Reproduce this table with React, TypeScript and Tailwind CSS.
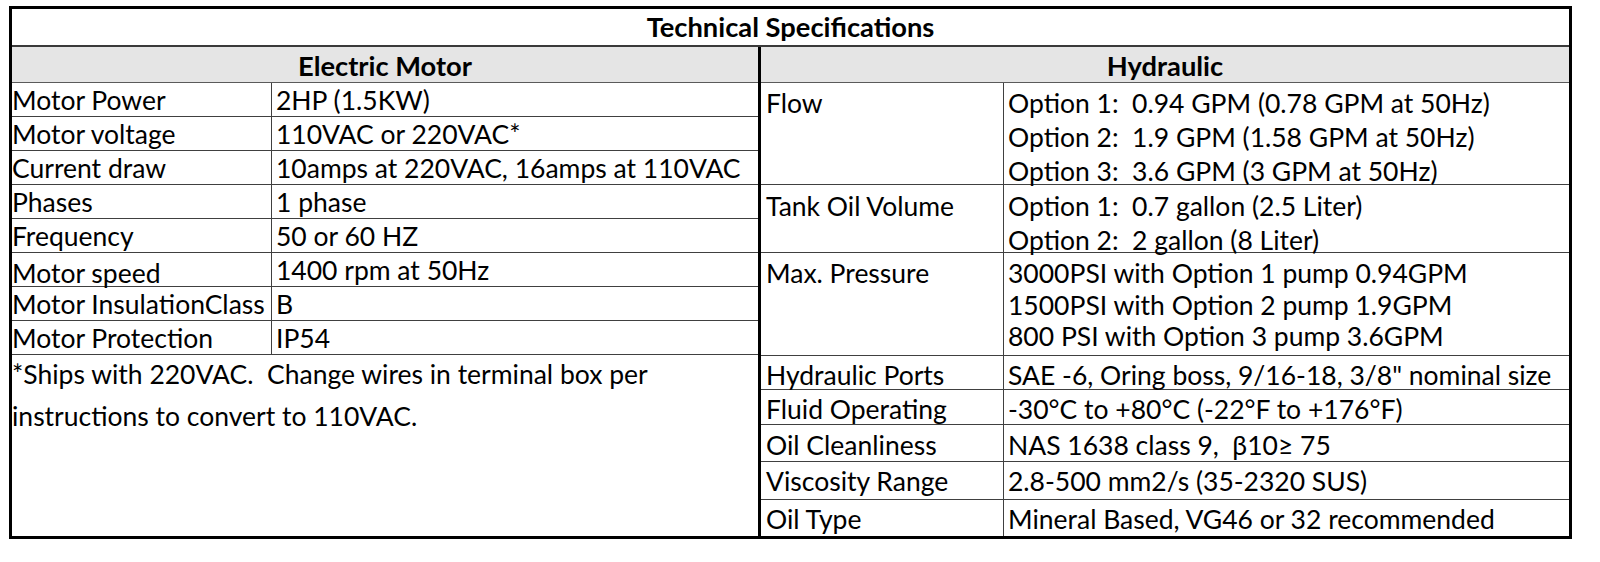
import React from "react";

type LeftRow = { k: string; v: string; kpt?: string };

const leftRows: LeftRow[] = [
  { k: "Motor Power", v: "2HP (1.5KW)" },
  { k: "Motor voltage", v: "110VAC or 220VAC*" },
  { k: "Current draw", v: "10amps at 220VAC, 16amps at 110VAC" },
  { k: "Phases", v: "1 phase" },
  { k: "Frequency", v: "50 or 60 HZ" },
  { k: "Motor speed", v: "1400 rpm at 50Hz", kpt: "pt-[3px]" },
  { k: "Motor InsulationClass", v: "B" },
  { k: "Motor Protection", v: "IP54" },
];

type RightRow = { k: string; v: string[]; h: string; pt: string; lh: string; last?: boolean };

const rightRows: RightRow[] = [
  {
    k: "Flow",
    v: [
      "Option 1:  0.94 GPM (0.78 GPM at 50Hz)",
      "Option 2:  1.9 GPM (1.58 GPM at 50Hz)",
      "Option 3:  3.6 GPM (3 GPM at 50Hz)",
    ],
    h: "h-[102px]",
    pt: "pt-[3px]",
    lh: "leading-[34px]",
  },
  {
    k: "Tank Oil Volume",
    v: ["Option 1:  0.7 gallon (2.5 Liter)", "Option 2:  2 gallon (8 Liter)"],
    h: "h-[68px]",
    pt: "pt-[4px]",
    lh: "leading-[34px]",
  },
  {
    k: "Max. Pressure",
    v: [
      "3000PSI with Option 1 pump 0.94GPM",
      "1500PSI with Option 2 pump 1.9GPM",
      "800 PSI with Option 3 pump 3.6GPM",
    ],
    h: "h-[103px]",
    pt: "pt-[5px]",
    lh: "leading-[31.5px]",
  },
  {
    k: "Hydraulic Ports",
    v: ['SAE -6, Oring boss, 9/16-18, 3/8" nominal size'],
    h: "h-[34px]",
    pt: "pt-[2px]",
    lh: "leading-[34px]",
  },
  {
    k: "Fluid Operating",
    v: ["-30°C to +80°C (-22°F to +176°F)"],
    h: "h-[35px]",
    pt: "pt-[2px]",
    lh: "leading-[34px]",
  },
  {
    k: "Oil Cleanliness",
    v: ["NAS 1638 class 9,  β10≥ 75"],
    h: "h-[37px]",
    pt: "pt-[3px]",
    lh: "leading-[34px]",
  },
  {
    k: "Viscosity Range",
    v: ["2.8-500 mm2/s (35-2320 SUS)"],
    h: "h-[38px]",
    pt: "pt-[2px]",
    lh: "leading-[34px]",
  },
  {
    k: "Oil Type",
    v: ["Mineral Based, VG46 or 32 recommended"],
    h: "h-[36px]",
    pt: "pt-[2px]",
    lh: "leading-[34px]",
    last: true,
  },
];

export default function App() {
  return (
    <div className="w-[1600px] h-[562px] bg-white pt-[6px] pl-[9px]">
      <div className="w-[1563px] h-[533px] border-[3px] border-black flex flex-col font-['Lato'] text-[26.5px] text-black overflow-hidden">
        <div className="h-[38px] shrink-0 border-b-2 border-[#3a3a3a] flex items-center justify-center font-bold text-[27.3px] leading-[36px]">
          Technical Specifications
        </div>
        <div className="flex flex-1 min-h-0">
          {/* Left: Electric Motor */}
          <div className="w-[749px] shrink-0 border-r-[3px] border-black flex flex-col">
            <div className="h-[36px] shrink-0 bg-[#e5e5e5] border-b border-[#5a5a5a] flex items-center justify-center font-bold text-[27.3px] leading-[36px] pt-[2px]">
              Electric Motor
            </div>
            {leftRows.map((r) => (
              <div key={r.k} className="h-[34px] shrink-0 border-b border-[#404040] grid grid-cols-[260px_1fr] leading-[34px] whitespace-pre">
                <div className={`border-r border-[#404040] overflow-visible ${r.kpt ?? ""}`}>{r.k}</div>
                <div className="pl-[4px]">{r.v}</div>
              </div>
            ))}
            <div className="flex-1 -mt-[2px] leading-[42px]">
              <div>*Ships with 220VAC.&nbsp; Change wires in terminal box per</div>
              <div>instructions to convert to 110VAC.</div>
            </div>
          </div>
          {/* Right: Hydraulic */}
          <div className="flex-1 flex flex-col min-w-0">
            <div className="h-[36px] shrink-0 bg-[#e5e5e5] border-b border-[#5a5a5a] flex items-center justify-center font-bold text-[27.3px] leading-[36px] pt-[2px]">
              Hydraulic
            </div>
            {rightRows.map((r) => (
              <div
                key={r.k}
                className={`${r.h} shrink-0 grid grid-cols-[243px_1fr] whitespace-pre ${r.last ? "" : "border-b border-[#404040]"}`}
              >
                <div className={`border-r border-[#404040] pl-[5px] ${r.pt} ${r.lh}`}>{r.k}</div>
                <div className={`pl-[4px] ${r.pt} ${r.lh}`}>
                  {r.v.map((line) => (
                    <div key={line}>{line}</div>
                  ))}
                </div>
              </div>
            ))}
          </div>
        </div>
      </div>
    </div>
  );
}
